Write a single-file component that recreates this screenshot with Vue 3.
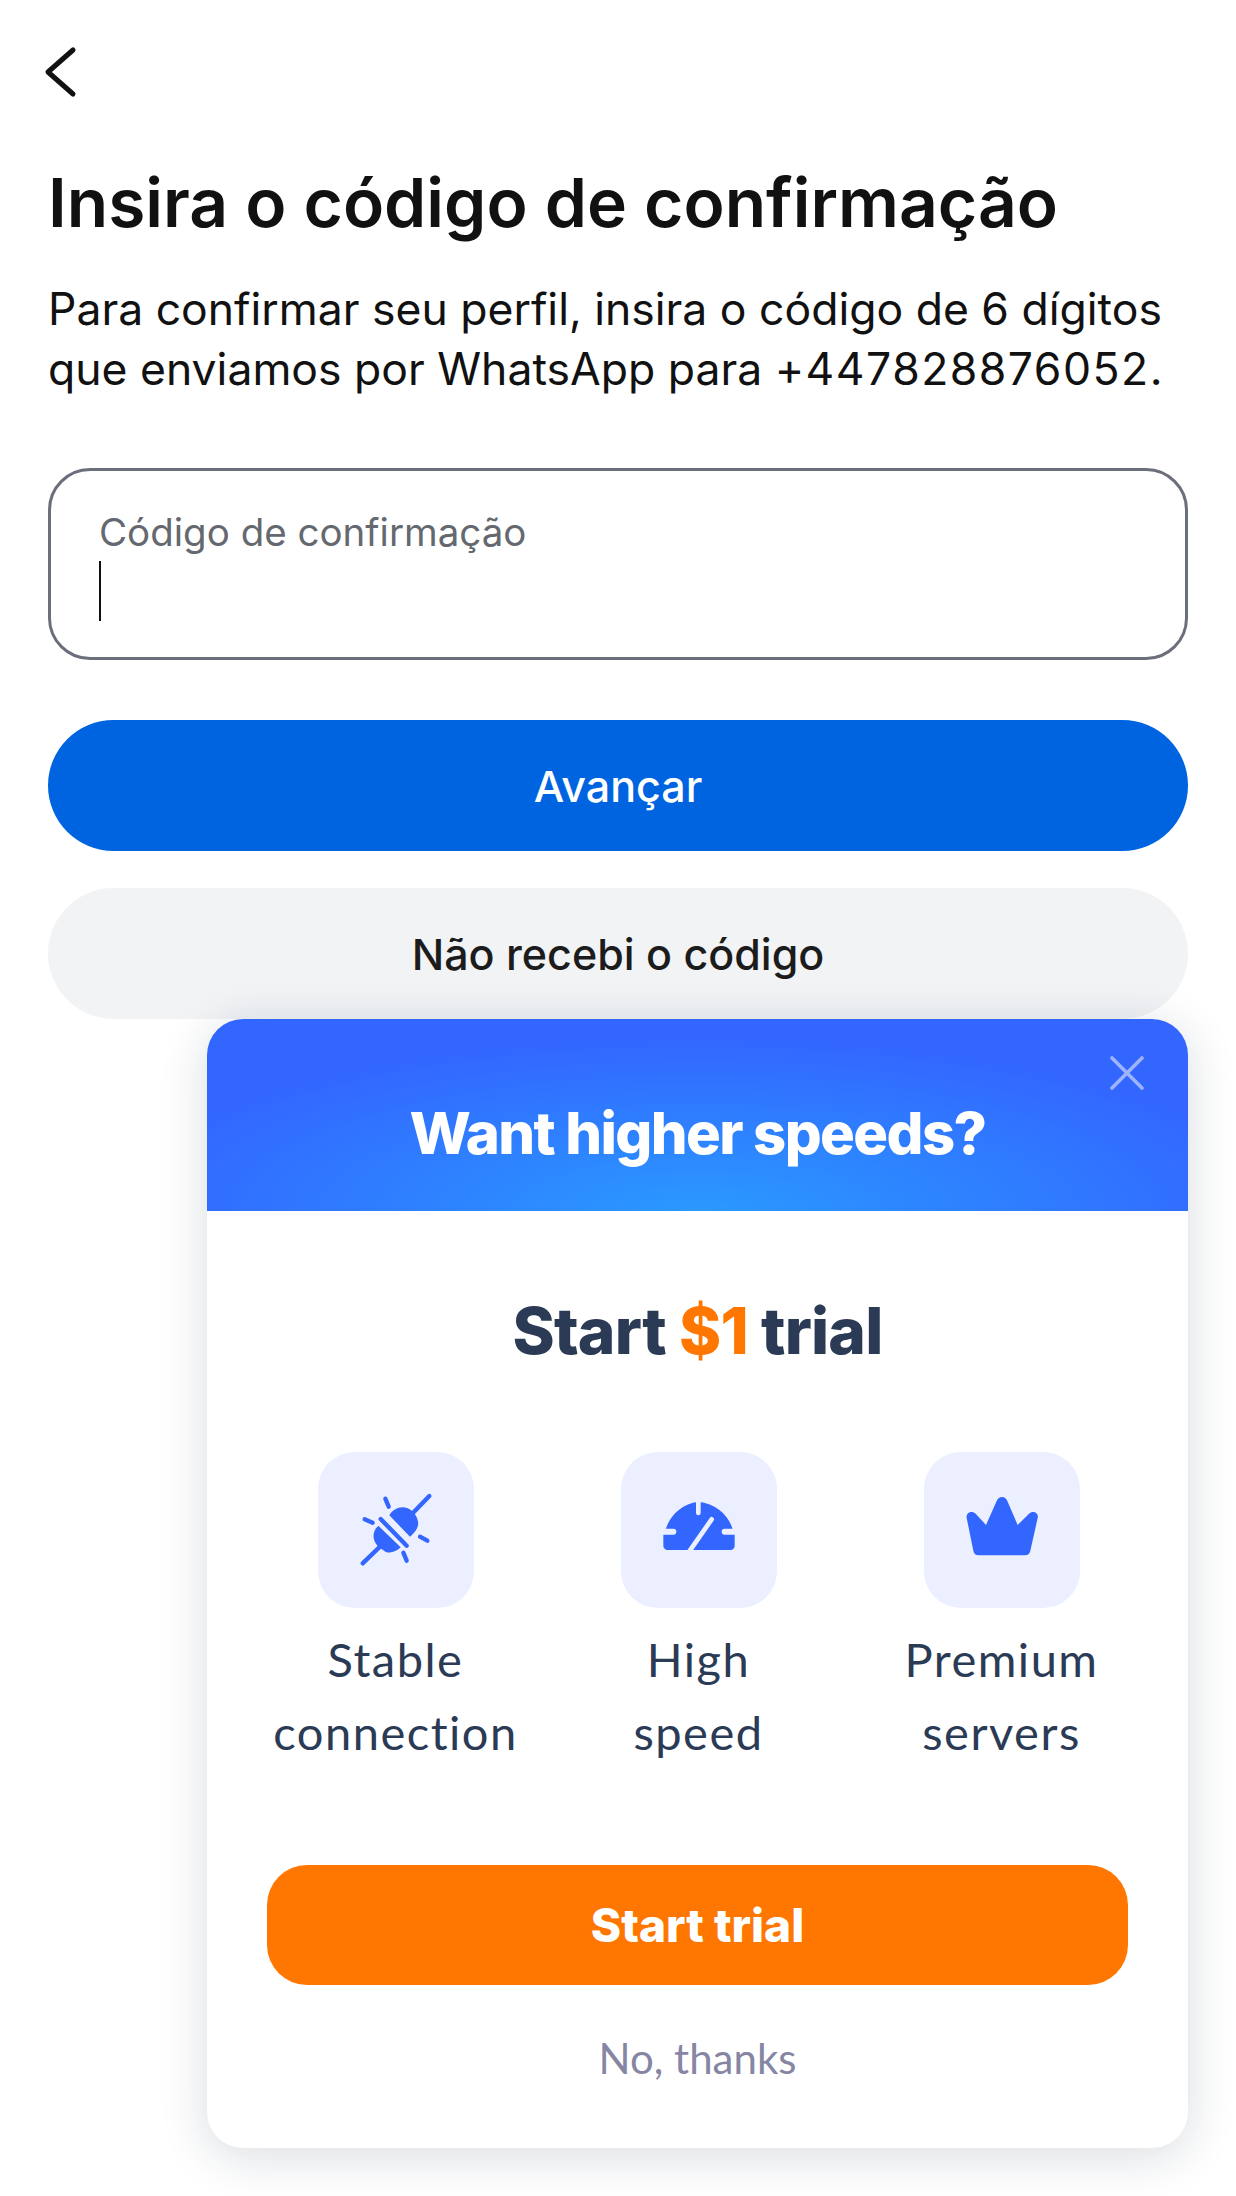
<template>
  <div class="page">
    <button class="back" aria-label="Voltar">
      <svg width="40" height="56" viewBox="0 0 40 56" fill="none">
        <path d="M33 6 L8 28 L33 50" stroke="#111" stroke-width="5" stroke-linecap="round" stroke-linejoin="round" />
      </svg>
    </button>

    <h1 class="title">Insira o código de confirmação</h1>
    <p class="lead">Para confirmar seu perfil, insira o código de 6 dígitos<br />que enviamos por WhatsApp para <span class="phone">+447828876052.</span></p>

    <div class="field">
      <span class="field-label">Código de confirmação</span>
      <span class="caret"></span>
    </div>

    <button class="btn primary">Avançar</button>
    <button class="btn secondary">Não recebi o código</button>

    <div class="promo">
      <div class="promo-head">
        <svg class="close" width="34" height="34" viewBox="0 0 34 34" fill="none">
          <path d="M2 2 L32 32 M32 2 L2 32" stroke="#9db4fd" stroke-width="3.6" stroke-linecap="round" />
        </svg>
        <h2>Want higher speeds?</h2>
      </div>
      <div class="promo-body">
        <div class="offer">Start <span>$1</span> trial</div>
        <div class="features">
          <div v-for="f in features" :key="f.id" class="feature">
            <div class="tile">
              <svg v-if="f.id === 'plug'" width="156" height="156" viewBox="54 66 468 468" fill="#3366ff">
                <g stroke="#3366ff" stroke-width="13" stroke-linecap="round" fill="none">
                  <path d="M388 198 L338 250" />
                  <path d="M188 400 L240 350" />
                  <path d="M242 267 L320 347" />
                  <path d="M256 206 L266 230" />
                  <path d="M194 268 L218 278" />
                  <path d="M360 320 L382 332" />
                  <path d="M310 368 L320 392" />
                </g>
                <path d="M268 256 C 276 241 292 232 308 232 C 326 232 344 246 351 264 C 359 283 354 300 330 320 Z" />
                <path d="M235 287 L302 352 C 288 366 270 371 256 365 L 238 352 C 218 336 213 306 235 287 Z" />
              </svg>
              <svg v-else-if="f.id === 'speed'" width="156" height="156" viewBox="33 66 468 468" fill="#3366ff">
                <path d="M165 305 C 178 255 215 222 265 215 C 320 222 358 255 370 305 L374 305 L374 348 C 374 355 368 360 362 360 L172 360 C 166 360 160 355 160 348 L160 305 Z" />
                <g stroke="#ebefff" stroke-linecap="round" fill="none">
                  <path d="M265 205 L265 249" stroke-width="14" />
                  <path d="M150 305 L190 305" stroke-width="18" />
                  <path d="M384 305 L344 305" stroke-width="18" />
                  <path d="M305 268 L238 364" stroke-width="14" />
                </g>
              </svg>
              <svg v-else width="156" height="156" viewBox="42 66 468 468" fill="#3366ff">
                <path d="M205 376 C 197 376 192 371 190 362 L170 264 C 167 247 186 240 197 251 L228 285 L260 213 C 266 197 286 197 292 213 L323 285 L357 251 C 368 240 387 247 383 264 L361 362 C 359 371 354 376 345 376 Z" />
              </svg>
            </div>
            <div class="feature-label">{{ f.line1 }}<br />{{ f.line2 }}</div>
          </div>
        </div>
        <button class="start">Start trial</button>
        <div class="decline">No, thanks</div>
      </div>
    </div>
  </div>
</template>

<script setup>
const features = [
  { id: 'plug', line1: 'Stable', line2: 'connection' },
  { id: 'speed', line1: 'High', line2: 'speed' },
  { id: 'crown', line1: 'Premium', line2: 'servers' }
]
</script>

<style>
html, body {
  margin: 0;
  background: #fff;
}
</style>

<style scoped>
.page {
  position: relative;
  width: 1236px;
  height: 2196px;
  padding: 44px 48px 0;
  box-sizing: border-box;
  background: #fff;
  font-family: Inter, "Noto Sans", sans-serif;
  overflow: hidden;
}

button {
  border: none;
  font-family: inherit;
  display: block;
  padding: 0;
}

.back {
  background: none;
  width: 40px;
  height: 56px;
  margin-left: -8px;
}

.title {
  margin: 62px 0 0;
  font-size: 67.7px;
  line-height: 80px;
  font-weight: 600;
  color: #111;
}

.lead {
  margin: 37px 0 0;
  font-size: 44.5px;
  line-height: 60px;
  color: #111;
  white-space: nowrap;
}

.phone {
  letter-spacing: 1.5px;
}

.field {
  margin-top: 69px;
  height: 192px;
  border: 3px solid #6b6f7a;
  border-radius: 42px;
  box-sizing: border-box;
  padding: 36px 48px 0;
}

.field-label {
  display: block;
  font-size: 38.5px;
  line-height: 50px;
  color: #65686f;
}

.caret {
  display: block;
  width: 2px;
  height: 60px;
  margin-top: 4px;
  background: #111;
}

.btn {
  width: 100%;
  height: 131px;
  border-radius: 66px;
  font-size: 43px;
  font-weight: 500;
}

.primary {
  margin-top: 60px;
  background: #0064e0;
  color: #fff;
}

.secondary {
  margin-top: 37px;
  background: #f1f3f5;
  color: #1c1c1c;
}

.promo {
  position: absolute;
  left: 207px;
  top: 1019px;
  width: 981px;
  height: 1129px;
  border-radius: 36px;
  background: #fff;
  box-shadow: 0 8px 48px rgba(20, 35, 60, 0.16);
  overflow: hidden;
}

.promo-head {
  position: relative;
  height: 192px;
  background: radial-gradient(ellipse 60% 90% at 50% 100%, #2a99ff 0%, #3366ff 100%);
  display: flex;
  align-items: flex-end;
  justify-content: center;
}

.close {
  position: absolute;
  right: 44px;
  top: 37px;
}

.promo-head h2 {
  margin: 0 0 46px;
  font-size: 58px;
  line-height: 64px;
  font-weight: 800;
  letter-spacing: -1.6px;
  color: #fff;
}

.promo-body {
  display: flex;
  flex-direction: column;
  align-items: center;
  padding: 0 60px;
}

.offer {
  margin-top: 82px;
  font-size: 64px;
  line-height: 76px;
  font-weight: 800;
  letter-spacing: -0.8px;
  color: #2b3a55;
}

.offer span {
  color: #ff7700;
}

.features {
  margin: 83px 0 0 2px;
  width: 909px;
  display: grid;
  grid-template-columns: repeat(3, 1fr);
}

.feature {
  display: flex;
  flex-direction: column;
  align-items: center;
}

.tile {
  width: 156px;
  height: 156px;
  border-radius: 37px;
  background: #ebefff;
  display: flex;
  align-items: center;
  justify-content: center;
}

.feature-label {
  margin-top: 15px;
  font-family: Lato, Inter, sans-serif;
  font-size: 47px;
  line-height: 73px;
  letter-spacing: 1.5px;
  text-align: center;
  color: #2b3a55;
}

.start {
  margin-top: 96px;
  width: 100%;
  height: 120px;
  border-radius: 40px;
  background: #ff7700;
  color: #fff;
  font-size: 46px;
  font-weight: 800;
}

.decline {
  margin-top: 48px;
  font-family: Lato, Inter, sans-serif;
  font-size: 42px;
  line-height: 50px;
  color: #8686a4;
  font-variant-ligatures: none;
}
</style>
